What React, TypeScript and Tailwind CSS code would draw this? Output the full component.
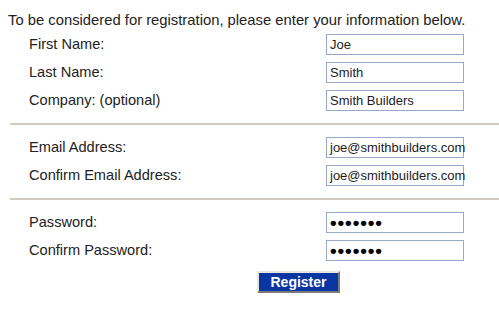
import React from "react";

const font = { fontFamily: '"Liberation Sans", Arial, sans-serif' };

function Field({ value, password }: { value: string; password?: boolean }) {
  return (
    <div className="ml-auto mr-[35px] flex h-[21px] w-[138px] items-center border border-[#95aacb] bg-white pl-[3px] text-[13px] text-[#1c1c1c]">
      {password ? (
        <span className="text-[19px] font-bold leading-none tracking-[0.9px] text-black">•••••••</span>
      ) : (
        <span className="leading-none">{value}</span>
      )}
    </div>
  );
}

function Row({ label, value, password }: { label: string; value: string; password?: boolean }) {
  return (
    <div className="flex h-[28px] items-center">
      <span className="mt-[2px] pl-[21px] text-[14.6px] text-[#222]">{label}</span>
      <Field value={value} password={password} />
    </div>
  );
}

function Sep() {
  return (
    <div className="flex h-[19px] items-center pl-[2px]">
      <div className="h-[2px] w-full bg-[#cfcbbf]" />
    </div>
  );
}

export default function App() {
  return (
    <div className="h-[309px] w-[499px] bg-white pl-[8px]" style={font}>
      <div className="pt-[12px] text-[14.8px] leading-[16px] text-[#222]">
        To be considered for registration, please enter your information below.
      </div>
      <div className="mt-[2px]">
        <Row label="First Name:" value="Joe" />
        <Row label="Last Name:" value="Smith" />
        <Row label="Company: (optional)" value="Smith Builders" />
        <Sep />
        <Row label="Email Address:" value="joe@smithbuilders.com" />
        <Row label="Confirm Email Address:" value="joe@smithbuilders.com" />
        <Sep />
        <Row label="Password:" value="" password />
        <Row label="Confirm Password:" value="" password />
      </div>
      <div className="mt-[7px] flex pl-[249px]">
        <button className="h-[22px] w-[83px] border-t-2 border-l-2 border-b-2 border-r-2 border-t-[#e8e6df] border-l-[#e8e6df] border-b-[#7a7a7a] border-r-[#7a7a7a] bg-[#0a36a3] text-[14px] font-bold leading-none text-white">
          Register
        </button>
      </div>
    </div>
  );
}
